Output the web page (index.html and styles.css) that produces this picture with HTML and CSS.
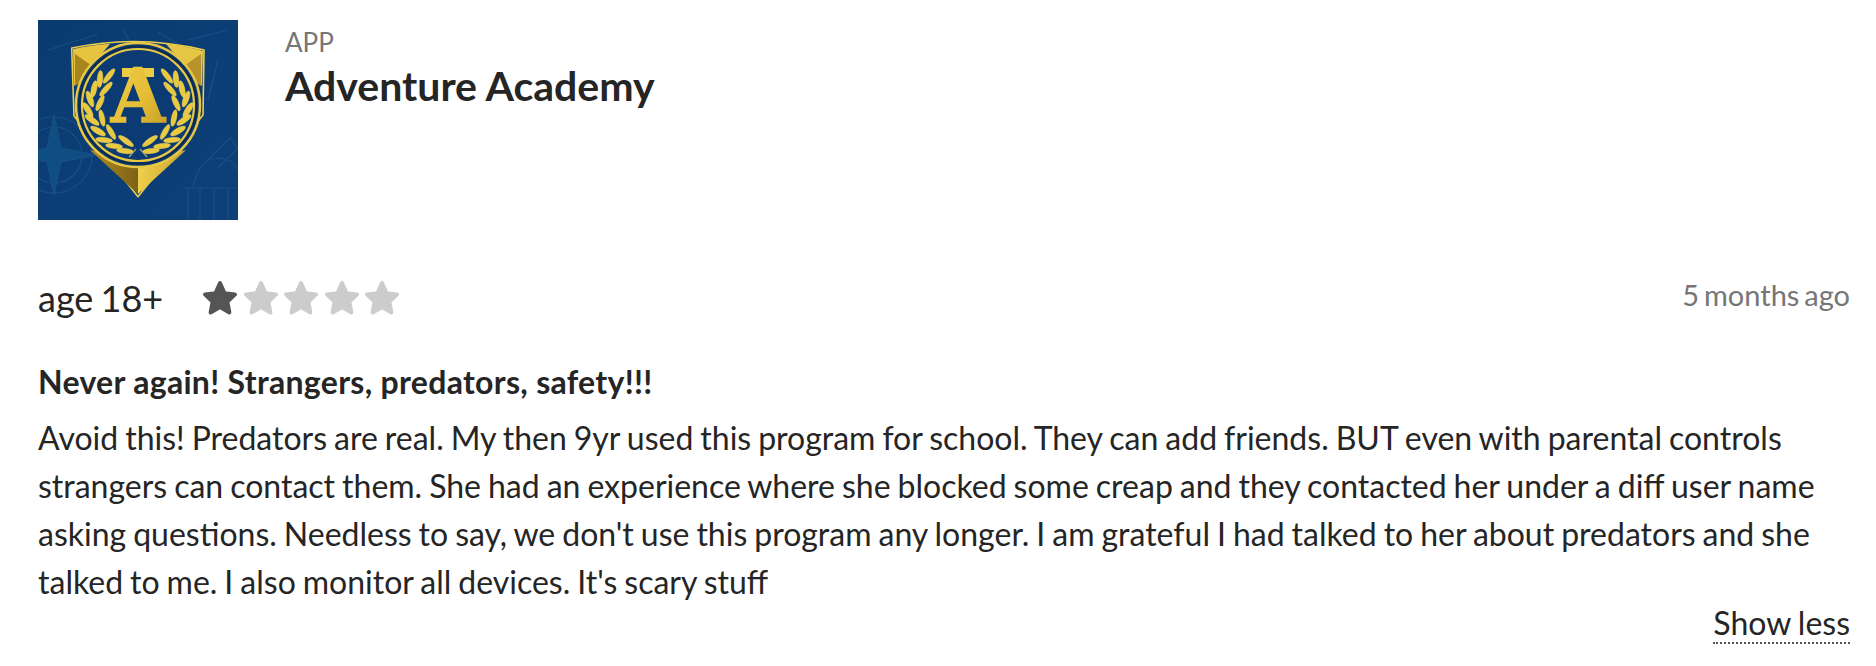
FILE: index.html
```html
<!DOCTYPE html>
<html>
	<head>
		<meta charset="UTF-8">
		<title>Adventure Academy review</title>
		<link rel="stylesheet" href="styles.css">
	</head>

	<body>
		<div class="review">
			<div class="product">
				<svg class="logo" viewBox="0 0 200 200" width="200" height="200" role="img" aria-label="Adventure Academy logo">
					<defs>
						<linearGradient id="bg" x1="0" y1="0" x2="1" y2="1">
							<stop offset="0" stop-color="#0a3b70"/>
							<stop offset="1" stop-color="#0e3f78"/>
						</linearGradient>
						<linearGradient id="gold" x1="0" y1="0" x2="1" y2="1">
							<stop offset="0" stop-color="#f0cf4a"/>
							<stop offset="0.55" stop-color="#e5bd35"/>
							<stop offset="1" stop-color="#c19a26"/>
						</linearGradient>
						<linearGradient id="vleft" x1="0" y1="0" x2="1" y2="0">
							<stop offset="0" stop-color="#b08c22"/>
							<stop offset="1" stop-color="#7d6215"/>
						</linearGradient>
						<linearGradient id="vright" x1="0" y1="0" x2="1" y2="0">
							<stop offset="0" stop-color="#efd04c"/>
							<stop offset="1" stop-color="#c9a42c"/>
						</linearGradient>
						<g id="branch" fill="#e9c93f" stroke="#f3dc68" stroke-width="0.4">
							<ellipse cx="71" cy="56" rx="9" ry="2.6" transform="rotate(-52 71 56)"/>
							<ellipse cx="62" cy="59" rx="8.5" ry="2.8" transform="rotate(-85 62 59)"/>
							<ellipse cx="68" cy="69" rx="9" ry="2.6" transform="rotate(-48 68 69)"/>
							<ellipse cx="56" cy="69" rx="8.5" ry="2.8" transform="rotate(-78 56 69)"/>
							<ellipse cx="62" cy="83" rx="8.5" ry="2.6" transform="rotate(-65 62 83)"/>
							<ellipse cx="52" cy="79" rx="8.5" ry="2.8" transform="rotate(70 52 79)"/>
							<ellipse cx="64" cy="98" rx="8.5" ry="2.6" transform="rotate(78 64 98)"/>
							<ellipse cx="50" cy="90" rx="8.5" ry="2.8" transform="rotate(58 50 90)"/>
							<ellipse cx="54" cy="100" rx="8.5" ry="2.8" transform="rotate(35 54 100)"/>
							<ellipse cx="60" cy="111" rx="8.5" ry="2.8" transform="rotate(30 60 111)"/>
							<ellipse cx="73" cy="112" rx="8.5" ry="2.6" transform="rotate(60 73 112)"/>
							<ellipse cx="66" cy="120" rx="8.5" ry="2.6" transform="rotate(6 66 120)"/>
							<ellipse cx="88" cy="121" rx="9" ry="2.6" transform="rotate(35 88 121)"/>
							<ellipse cx="76" cy="126" rx="8.5" ry="2.6" transform="rotate(6 76 126)"/>
							<ellipse cx="87" cy="131" rx="8.5" ry="2.6" transform="rotate(6 87 131)"/>
						</g>
					</defs>
					<rect width="200" height="200" fill="url(#bg)"/>

					<!-- faint map drawings behind the shield -->
					<g fill="none" stroke="#1f5d90" stroke-width="1.2" opacity="0.6">
						<circle cx="16" cy="135" r="38"/>
						<circle cx="16" cy="135" r="28"/>
						<path d="M16 95 L23 128 L58 135 L23 142 L16 175 L9 142 L-20 135 L9 128 Z" fill="#135a8c"/>
						<path d="M145 168 H200 M150 168 V200 M162 168 V200 M176 168 V200 M190 168 V200 M155 168 Q160 140 178 138 Q195 138 200 150"/>
						<path d="M168 142 L192 118 L200 128 L180 148"/>
						<path d="M10 30 L60 14 M85 10 L100 36 M120 12 L150 30 M180 40 L170 80 M150 20 L190 10"/>
					</g>

					<!-- shield -->
					<path d="M33.700 28 Q100 14 166 30 L165 95 L100 176.700 L36 96 Z" fill="#0c3a72" stroke="#ecce4c" stroke-width="1.600" stroke-linejoin="round"/>
					<path d="M35 29 Q60 24 72 24 L36 66 Z" fill="#e6c440"/>
					<path d="M37 34 L60 50 L37 66 Z" fill="#a8841f"/>
					<path d="M165 31 Q140 24 128 24 L164 66 Z" fill="#e8c645"/>
					<path d="M163 34 L140 50 L163 66 Z" fill="#b8922a"/>
					<path d="M52 130 L100 174 V140 Z" fill="url(#vleft)"/>
					<path d="M148 130 L100 174 V140 Z" fill="url(#vright)"/>
					<circle cx="100" cy="85" r="62" fill="#0c3a72" stroke="#e6c844" stroke-width="2.500"/>
					<circle cx="100" cy="85" r="58.500" fill="none" stroke="#0c2a4e" stroke-width="2"/>
					<circle cx="100" cy="85" r="56" fill="#0c3a72" stroke="#e6c844" stroke-width="2.200"/>

					<use href="#branch"/>
					<use href="#branch" transform="translate(200 0) scale(-1 1)"/>
					<path d="M91 137 L98 129 M109 137 L102 129" stroke="#a9a77a" stroke-width="1.200"/>

					<!-- flat slab across the top of the letter -->
					<rect x="84" y="48" width="32" height="9" fill="#edcb45"/>
					<text class="logo-letter" x="100" y="102" text-anchor="middle" textLength="54" lengthAdjust="spacingAndGlyphs" fill="url(#gold)" stroke="url(#gold)" stroke-width="1.600">A</text>
				</svg>

				<div class="product-info">
					<div class="product-type">APP</div>
					<div class="product-name">Adventure Academy</div>
				</div>
			</div>

			<div class="meta">
				<div class="age">age 18+</div>
				<div class="stars">
					<svg class="star on" viewBox="0 0 36 36" width="36" height="36"><polygon points="18,3 22.600,13.200 33,14.400 25.300,21.700 27.400,32.500 18,27 8.600,32.500 10.700,21.700 3,14.400 13.400,13.200"/></svg>
					<svg class="star" viewBox="0 0 36 36" width="36" height="36"><polygon points="18,3 22.600,13.200 33,14.400 25.300,21.700 27.400,32.500 18,27 8.600,32.500 10.700,21.700 3,14.400 13.400,13.200"/></svg>
					<svg class="star" viewBox="0 0 36 36" width="36" height="36"><polygon points="18,3 22.600,13.200 33,14.400 25.300,21.700 27.400,32.500 18,27 8.600,32.500 10.700,21.700 3,14.400 13.400,13.200"/></svg>
					<svg class="star" viewBox="0 0 36 36" width="36" height="36"><polygon points="18,3 22.600,13.200 33,14.400 25.300,21.700 27.400,32.500 18,27 8.600,32.500 10.700,21.700 3,14.400 13.400,13.200"/></svg>
					<svg class="star" viewBox="0 0 36 36" width="36" height="36"><polygon points="18,3 22.600,13.200 33,14.400 25.300,21.700 27.400,32.500 18,27 8.600,32.500 10.700,21.700 3,14.400 13.400,13.200"/></svg>
				</div>
				<div class="date">5 months ago</div>
			</div>

			<div class="title">Never again! Strangers, predators, safety!!!</div>
			<p class="text">Avoid this! Predators are real. My then 9yr used this program for school. They can add friends. BUT even with parental controls strangers can contact them. She had an experience where she blocked some creap and they contacted her under a diff user name asking questions. Needless to say, we don't use this program any longer. I am grateful I had talked to her about predators and she talked to me. I also monitor all devices. It's scary stuff</p>

			<div class="more"><a class="show-less">Show less</a></div>
		</div>
	</body>
</html>
```

FILE: styles.css
```css
*{
	margin: 0;
	padding: 0;
	box-sizing: border-box;
}

body{
	background: #FFFFFF;
	color: #252525;
	font-family: "Lato", "Liberation Sans", sans-serif;
}

.review{
	padding: 20px 26px 0 38px;
}

/* logo and name */
.product{
	display: flex;
	gap: 47px;
}

.logo{
	display: block;
	flex: none;
}

.logo-letter{
	font-family: "DejaVu Serif", serif;
	font-weight: bold;
	font-size: 74px;
}

.product-type{
	margin-top: 8px;
	font-size: 26px;
	line-height: 28px;
	color: #767676;
}

.product-name{
	margin-top: 6px;
	font-size: 41px;
	line-height: 48px;
	font-weight: bold;
}

/* age, stars, date */
.meta{
	display: flex;
	align-items: center;
	margin-top: 54px;
	height: 48px;
}

.age{
	font-size: 36px;
	word-spacing: -2px;
	width: 164px;
}

.stars{
	display: flex;
	gap: 4.600px;
	flex: 1;
}

.star polygon{
	fill: #CCCCCC;
	stroke: #CCCCCC;
	stroke-width: 4;
	stroke-linejoin: round;
}

.star.on polygon{
	fill: #555555;
	stroke: #555555;
}

.date{
	font-size: 29px;
	word-spacing: -2.500px;
	color: #767676;
	margin-top: -8px;
}

/* review body */
.title{
	margin-top: 40px;
	font-size: 32px;
	line-height: 40px;
	font-weight: bold;
	letter-spacing: 0.3px;
}

.text{
	margin-top: 12px;
	font-size: 32px;
	line-height: 48px;
	word-spacing: -1.200px;
}

.more{
	display: flex;
	justify-content: flex-end;
	margin-top: -3px;
}

.show-less{
	font-size: 32px;
	line-height: 39px;
	word-spacing: -1px;
	border-bottom: 2px dotted #555555;
}
```
